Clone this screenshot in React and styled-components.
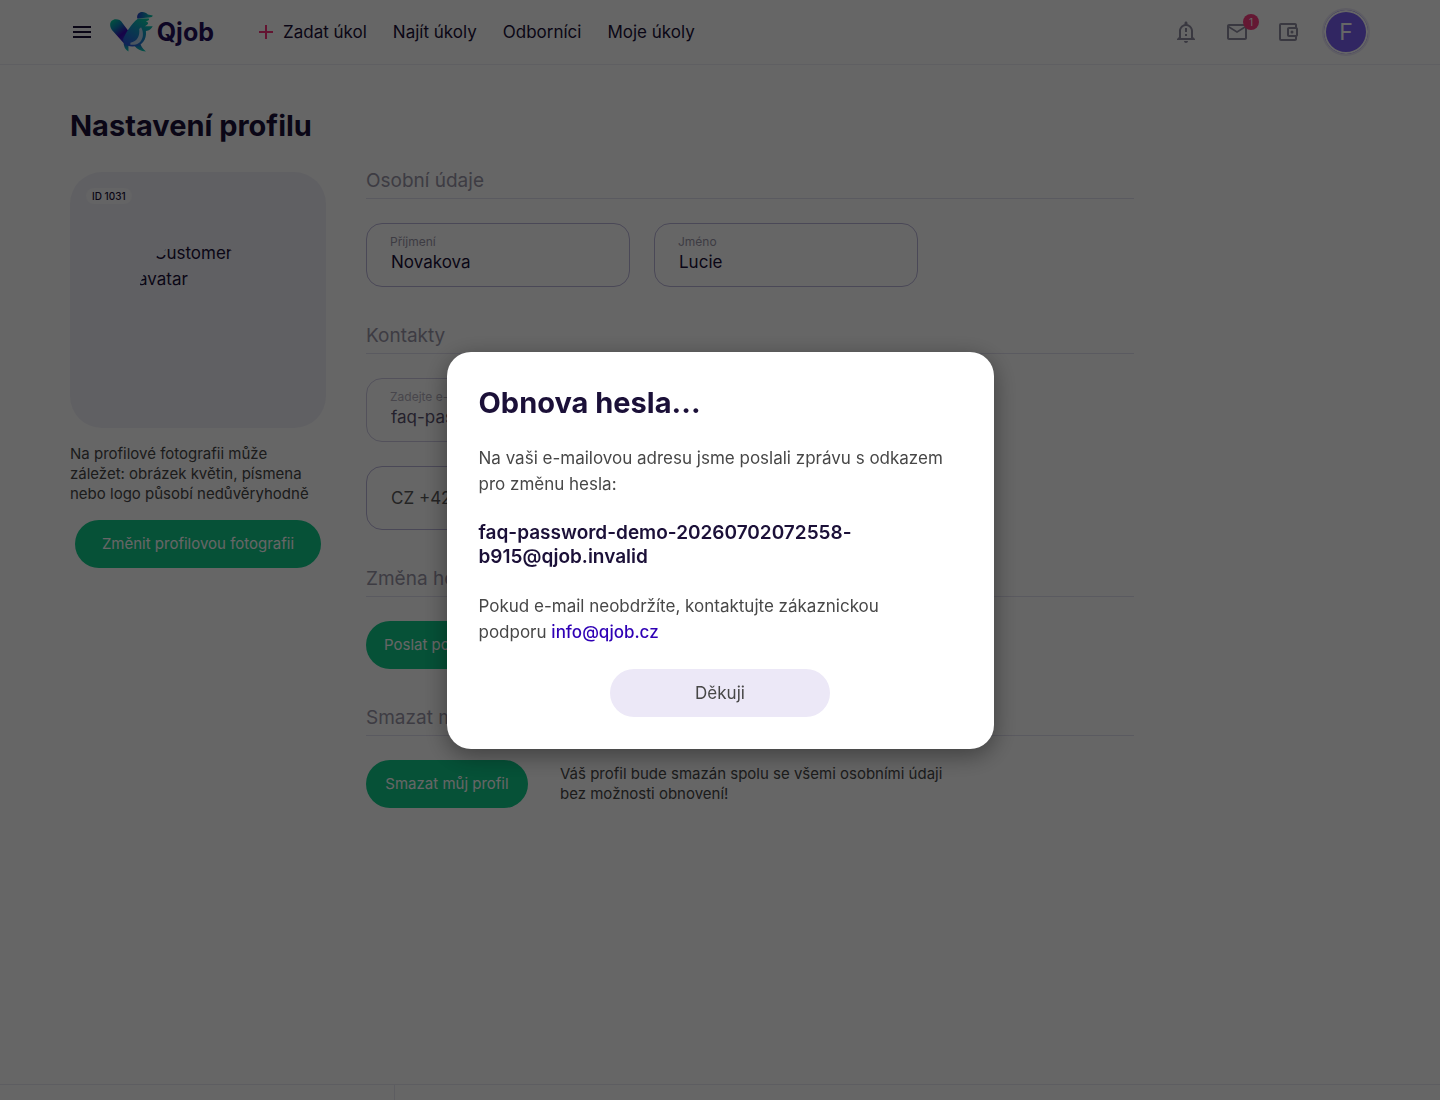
import React from "react";
import styled, { createGlobalStyle } from "styled-components";
import {
  MdMenu,
  MdAdd,
  MdOutlineNotificationImportant,
  MdMailOutline,
  MdOutlineAccountBalanceWallet,
} from "react-icons/md";

const GlobalStyle = createGlobalStyle`
  *, *::before, *::after { box-sizing: border-box; }
  body {
    margin: 0;
    overflow: hidden;
    background: #fff;
    color: #1b1038;
    font-family: Inter, "Noto Sans", sans-serif;
    font-size: 17px;
    line-height: 26px;
  }
  button, input, select { font: inherit; color: inherit; }
  h1, h2, p { margin: 0; }
`;

const Page = styled.div`
  display: flex;
  flex-direction: column;
  height: 100vh;
  overflow: hidden;
`;

const Header = styled.header`
  flex: none;
  border-bottom: 1px solid #eeedf4;
`;

const HeaderInner = styled.div`
  display: flex;
  align-items: center;
  height: 64px;
  padding: 0 70px;
`;

const IconButton = styled.button`
  position: relative;
  display: flex;
  padding: 0;
  border: 0;
  background: none;
  color: ${(p) => p.$color || "#8f8ca0"};
  cursor: pointer;
`;

const LogoLink = styled.a`
  display: flex;
  align-items: center;
  gap: 3px;
  width: 104px;
  margin: 0 40px 0 16px;
  color: #24105a;
  font-size: 25px;
  font-weight: 700;
  text-decoration: none;
`;

const Nav = styled.nav`
  display: flex;
  align-items: center;
  gap: 26px;
  flex: 1;
`;

const NavLink = styled.a`
  display: flex;
  align-items: center;
  gap: 5px;
  color: #1b1038;
  text-decoration: none;
  white-space: nowrap;

  svg { color: #f8337c; }
`;

const Actions = styled.div`
  display: flex;
  align-items: center;
  gap: 27px;
  margin-right: 22px;
`;

const Badge = styled.span`
  position: absolute;
  top: -6px;
  right: -10px;
  width: 16px;
  height: 16px;
  border-radius: 8px;
  background: #fb3d80;
  color: #fff;
  font-size: 10px;
  line-height: 16px;
  text-align: center;
`;

const Avatar = styled.button`
  width: 48px;
  height: 48px;
  padding: 0;
  border: 2px solid #ebe8f7;
  border-radius: 24px;
  background: #7a5ff5;
  box-shadow: inset 0 0 0 2px #fff;
  color: #fff;
  font-size: 23px;
  line-height: 44px;
  cursor: pointer;
`;

const Main = styled.main`
  flex: 1 0 auto;
  padding: 43px 70px 0;
`;

const PageTitle = styled.h1`
  margin-bottom: 24px;
  font-size: 29px;
  font-weight: 700;
  line-height: 36px;
`;

const Columns = styled.div`
  display: grid;
  grid-template-columns: 256px minmax(0, 768px);
  gap: 40px;
`;

const Sidebar = styled.aside`
  display: flex;
  flex-direction: column;
  align-items: center;
  gap: 16px;
  padding-top: 4px;
`;

const PhotoCard = styled.div`
  position: relative;
  display: flex;
  align-items: center;
  justify-content: center;
  width: 100%;
  aspect-ratio: 1;
  border-radius: 32px;
  background: #f1f1f8;
`;

const IdTag = styled.span`
  position: absolute;
  top: 16px;
  left: 16px;
  padding: 0 6px;
  border-radius: 8px;
  background: #f9f9fc;
  font-size: 10px;
  font-weight: 500;
  line-height: 16px;
`;

const PhotoCircle = styled.div`
  width: 120px;
  height: 120px;
  overflow: hidden;
  border-radius: 60px;
  text-indent: 16px;
`;

const Note = styled.p`
  color: #474747;
  font-size: 15px;
  line-height: 20px;
  max-width: ${(p) => p.$width || "none"};
`;

const GreenButton = styled.button`
  height: 48px;
  min-width: ${(p) => p.$width || "162px"};
  padding: 0 18px;
  border: 0;
  border-radius: 24px;
  background: #0fca8a;
  color: #fff;
  font-size: 15px;
  white-space: nowrap;
  cursor: pointer;
`;

const Sections = styled.div`
  display: flex;
  flex-direction: column;
  gap: 36px;
`;

const Section = styled.section`
  display: flex;
  flex-direction: column;
  align-items: flex-start;
  gap: 24px;
`;

const SectionTitle = styled.h2`
  align-self: stretch;
  padding-bottom: 4px;
  border-bottom: 1px solid #e2e0f0;
  color: #9a96a8;
  font-size: 19px;
  font-weight: 400;
  line-height: 26px;
`;

const FieldRow = styled.div`
  display: flex;
  flex-wrap: wrap;
  gap: 24px;
`;

const FieldBox = styled.div`
  display: flex;
  flex-direction: column;
  width: 264px;
  height: 64px;
  padding: 9px 23px;
  border: 1px solid ${(p) => (p.$muted ? "#cfcbe4" : "#bab4da")};
  border-radius: 16px;

  label {
    color: ${(p) => (p.$muted ? "#b3b0bd" : "#9a96a8")};
    font-size: 12px;
    line-height: 18px;
  }

  input {
    width: 100%;
    height: 22px;
    padding: 0 1px;
    border: 0;
    background: none;
    color: ${(p) => (p.$muted ? "#5b5370" : "#1b1038")};
    line-height: 22px;
    outline: 0;
  }
`;

const PhoneBox = styled.div`
  display: flex;
  align-items: center;
  width: 264px;
  height: 64px;
  padding: 0 23px;
  border: 1px solid #bab4da;
  border-radius: 16px;
  color: #5a5a5a;

  select, input {
    padding: 0 1px;
    border: 0;
    background: none;
    outline: 0;
    appearance: none;
  }

  select { flex: none; }
  input { flex: 1; min-width: 0; }
`;

const DeleteRow = styled.div`
  display: flex;
  align-items: center;
  gap: 32px;
`;

const Footer = styled.footer`
  display: grid;
  flex: none;
  grid-template-columns: 395px 1fr;
  height: 16px;
  border-top: 1px solid #e9e9f2;
`;

const FooterCell = styled.div`
  border-right: ${(p) => (p.$divided ? "1px solid #e9e9f2" : "0")};
`;

const Overlay = styled.div`
  position: fixed;
  inset: 0;
  display: flex;
  align-items: center;
  justify-content: center;
  background: rgba(0, 0, 0, 0.6);
`;

const Dialog = styled.div`
  display: flex;
  flex-direction: column;
  gap: 24px;
  width: 547px;
  max-width: 100%;
  padding: 32px;
  border-radius: 24px;
  background: #fff;
  box-shadow: 0 6px 24px rgba(0, 0, 0, 0.4);
  color: #474747;
`;

const DialogText = styled.p`
  max-width: 472px;

  a {
    color: #2f00b5;
    font-weight: 500;
    text-decoration: none;
  }
`;

const DialogTitle = styled.h2`
  color: #1b1038;
  font-size: 29px;
  font-weight: 700;
  line-height: 37px;
`;

const DialogEmail = styled.p`
  color: #1b1038;
  font-size: 19px;
  font-weight: 600;
  line-height: 24px;
`;

const DialogButton = styled.button`
  align-self: center;
  width: 220px;
  height: 48px;
  border: 0;
  border-radius: 24px;
  background: #ece8f7;
  cursor: pointer;
`;

function Bird() {
  return (
    <svg width="45" height="42" viewBox="0 0 45 42" aria-hidden="true">
      <defs>
        <linearGradient id="wing" x1="2" y1="9" x2="22" y2="34" gradientUnits="userSpaceOnUse">
          <stop offset="0" stopColor="#06c9a0" />
          <stop offset="0.25" stopColor="#0b84b4" />
          <stop offset="0.55" stopColor="#3a08b4" />
          <stop offset="1" stopColor="#2060d8" />
        </linearGradient>
        <linearGradient id="body" x1="35" y1="6" x2="18" y2="34" gradientUnits="userSpaceOnUse">
          <stop offset="0" stopColor="#08cfa4" />
          <stop offset="0.4" stopColor="#129cc0" />
          <stop offset="1" stopColor="#2b58dc" />
        </linearGradient>
        <linearGradient id="cap" x1="28" y1="4" x2="44" y2="5" gradientUnits="userSpaceOnUse">
          <stop offset="0" stopColor="#2440c8" />
          <stop offset="0.6" stopColor="#0c9cb4" />
          <stop offset="1" stopColor="#08cfa4" />
        </linearGradient>
        <linearGradient id="foot" x1="0" y1="31" x2="0" y2="41" gradientUnits="userSpaceOnUse">
          <stop offset="0" stopColor="#2848d0" />
          <stop offset="1" stopColor="#08cfb0" />
        </linearGradient>
      </defs>
      <path d="M14 32 19 34V41Q14 38 14 32Z" fill="url(#foot)" />
      <path d="M25 35 31 32Q32 37 37 41Q29 41 25 35Z" fill="url(#foot)" />
      <path d="M2 19C-2 13 1 8 6 8C9 8 11 9 13 12L19 20 22 35C17 35 14 33 11 29Z" fill="url(#wing)" />
      <path d="M29 7H40Q41 9 37 10Q42 12 36 15H44Q42 19 37 20C38 29 33 36 23 36C16 36 12 31 14 27C16 23 21 13 29 7Z" fill="url(#body)" />
      <path d="M32 16C37 25 32 36 21 34V32C28 31 31 25 30 18Z" fill="#b8d4ee" />
      <path d="M28 7C27-1 36-1 39 3L44 4Q44 6 40 6Z" fill="url(#cap)" />
    </svg>
  );
}

function Field({ id, label, value, muted }) {
  return (
    <FieldBox $muted={muted}>
      <label htmlFor={id}>{label}</label>
      <input id={id} defaultValue={value} disabled={muted} />
    </FieldBox>
  );
}

export default function App() {
  return (
    <>
      <GlobalStyle />
      <Page>
        <Header>
          <HeaderInner>
            <IconButton $color="#1b1038" aria-label="Menu">
              <MdMenu size={24} />
            </IconButton>
            <LogoLink href="#">
              <Bird />
              Qjob
            </LogoLink>
            <Nav>
              <NavLink href="#">
                <MdAdd size={24} />
                Zadat úkol
              </NavLink>
              <NavLink href="#">Najít úkoly</NavLink>
              <NavLink href="#">Odborníci</NavLink>
              <NavLink href="#">Moje úkoly</NavLink>
            </Nav>
            <Actions>
              <IconButton aria-label="Upozornění">
                <MdOutlineNotificationImportant size={24} />
              </IconButton>
              <IconButton aria-label="Zprávy">
                <MdMailOutline size={24} />
                <Badge>1</Badge>
              </IconButton>
              <IconButton aria-label="Peněženka">
                <MdOutlineAccountBalanceWallet size={24} />
              </IconButton>
            </Actions>
            <Avatar>F</Avatar>
          </HeaderInner>
        </Header>

        <Main>
          <PageTitle>Nastavení profilu</PageTitle>
          <Columns>
            <Sidebar>
              <PhotoCard>
                <IdTag>ID 1031</IdTag>
                <PhotoCircle>Customer avatar</PhotoCircle>
              </PhotoCard>
              <Note>
                Na profilové fotografii může záležet: obrázek květin, písmena nebo logo působí
                nedůvěryhodně
              </Note>
              <GreenButton $width="246px">Změnit profilovou fotografii</GreenButton>
            </Sidebar>

            <Sections>
              <Section>
                <SectionTitle>Osobní údaje</SectionTitle>
                <FieldRow>
                  <Field id="surname" label="Příjmení" value="Novakova" />
                  <Field id="name" label="Jméno" value="Lucie" />
                </FieldRow>
              </Section>
              <Section>
                <SectionTitle>Kontakty</SectionTitle>
                <Field
                  id="email"
                  label="Zadejte e-mail"
                  value="faq-password-demo-20260702072558-b915@qjob.invalid"
                  muted
                />
                <PhoneBox>
                  <select aria-label="Předvolba" defaultValue="420">
                    <option value="420">CZ +420</option>
                  </select>
                  <input type="tel" aria-label="Telefon" />
                </PhoneBox>
              </Section>
              <Section>
                <SectionTitle>Změna hesla</SectionTitle>
                <GreenButton>Poslat pokyny na e-mail</GreenButton>
              </Section>
              <Section>
                <SectionTitle>Smazat můj profil</SectionTitle>
                <DeleteRow>
                  <GreenButton>Smazat můj profil</GreenButton>
                  <Note $width="400px">
                    Váš profil bude smazán spolu se všemi osobními údaji bez možnosti obnovení!
                  </Note>
                </DeleteRow>
              </Section>
            </Sections>
          </Columns>
        </Main>

        <Footer>
          <FooterCell $divided />
          <FooterCell />
        </Footer>
      </Page>

      <Overlay>
        <Dialog role="dialog" aria-modal="true" aria-labelledby="reset-title">
          <DialogTitle id="reset-title">Obnova hesla...</DialogTitle>
          <DialogText>
            Na vaši e-mailovou adresu jsme poslali zprávu s odkazem pro změnu hesla:
          </DialogText>
          <DialogEmail>faq-password-demo-20260702072558-b915@qjob.invalid</DialogEmail>
          <DialogText>
            Pokud e-mail neobdržíte, kontaktujte zákaznickou podporu{" "}
            <a href="mailto:info@qjob.cz">info@qjob.cz</a>
          </DialogText>
          <DialogButton>Děkuji</DialogButton>
        </Dialog>
      </Overlay>
    </>
  );
}
